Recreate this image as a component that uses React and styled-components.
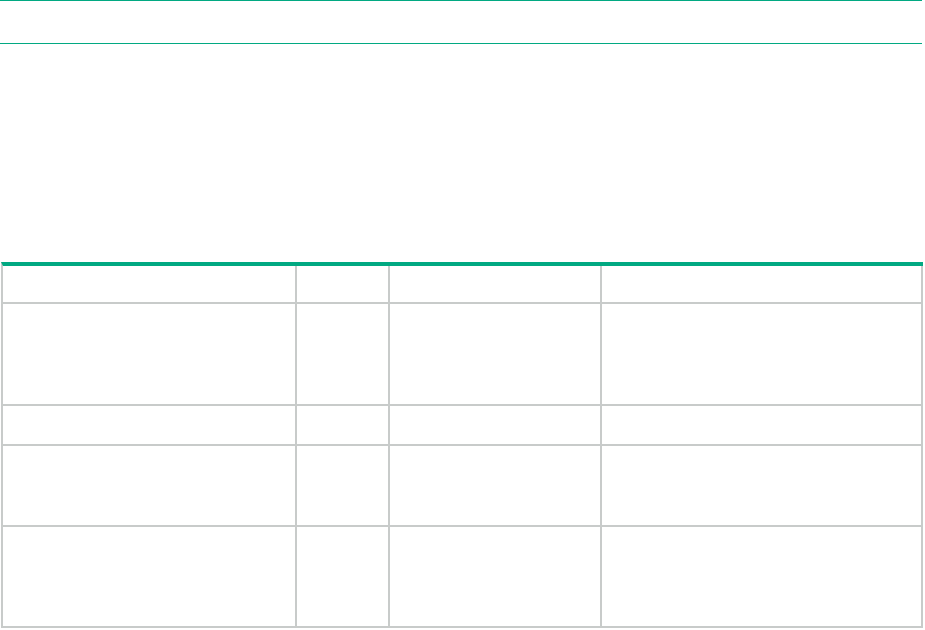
import React from "react";
import styled, { createGlobalStyle } from "styled-components";

const GlobalStyle = createGlobalStyle`
  html, body {
    margin: 0;
    padding: 0;
    background: #ffffff;
    font-family: "Liberation Sans", Arial, sans-serif;
  }
`;

const Page = styled.main`
  width: 925px;
  height: 630px;
  overflow: hidden;
`;

const TitleBar = styled.header`
  width: 922px;
  height: 42px;
  border-top: 1px solid #01a982;
  border-bottom: 1px solid #01a982;
`;

const Spacer = styled.div`
  height: ${({ size }) => size}px;
`;

const Table = styled.table`
  margin-left: 1px;
  width: 922px;
  table-layout: fixed;
  border-collapse: separate;
  border-spacing: 0;
  border-top: 4px solid #01a982;
  border-left: 2px solid #c8cbca;

  td {
    box-sizing: border-box;
    padding: 0;
    border-right: 2px solid #c8cbca;
    border-bottom: 2px solid #c8cbca;
  }
`;

const Row = styled.tr`
  height: ${({ h }) => h}px;
  > td {
    height: ${({ h }) => h}px;
  }
`;

const cols = [294, 93, 212, 321];
const rows = [38, 102, 40, 81, 101];

export default function App() {
  return (
    <Page>
      <GlobalStyle />
      <TitleBar />
      <Spacer size={218} />
      <Table>
        <colgroup>
          {cols.map((w, i) => (
            <col key={i} style={{ width: w }} />
          ))}
        </colgroup>
        <tbody>
          {rows.map((h, r) => (
            <Row key={r} h={h}>
              {cols.map((_, c) => (
                <td key={c} />
              ))}
            </Row>
          ))}
        </tbody>
      </Table>
    </Page>
  );
}
